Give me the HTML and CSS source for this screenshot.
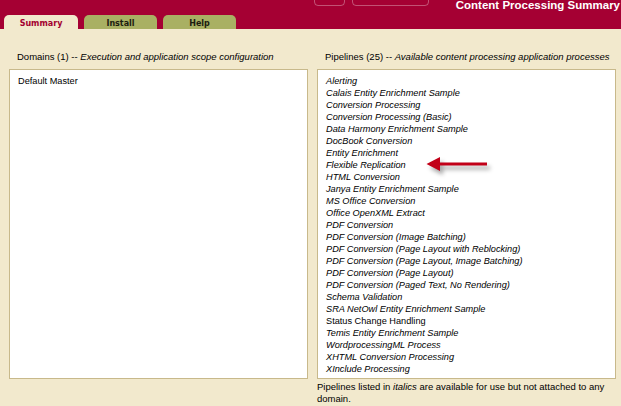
FILE: index.html
```html
<!DOCTYPE html>
<html>
<head>
<meta charset="utf-8">
<link rel="stylesheet" href="styles.css">
</head>
<body>
<header class="topbar">
  <nav class="tabs">
    <div class="tab tab-active">Summary</div>
    <div class="tab">Install</div>
    <div class="tab">Help</div>
  </nav>
  <div class="ghost-buttons">
    <span class="ghost ghost-sm"></span>
    <span class="ghost ghost-lg"></span>
  </div>
  <div class="page-title">Content Processing Summary</div>
</header>
<main class="content">
  <section class="col">
    <h2 class="col-head">Domains (1) -- <em>Execution and application scope configuration</em></h2>
    <div class="listbox">
      <div class="item">Default Master</div>
    </div>
  </section>
  <section class="col">
    <h2 class="col-head">Pipelines (25) -- <em>Available content processing application processes</em></h2>
    <div class="listbox">
      <div class="item it">Alerting</div>
      <div class="item it">Calais Entity Enrichment Sample</div>
      <div class="item it">Conversion Processing</div>
      <div class="item it">Conversion Processing (Basic)</div>
      <div class="item it">Data Harmony Enrichment Sample</div>
      <div class="item it">DocBook Conversion</div>
      <div class="item it">Entity Enrichment</div>
      <div class="item it">Flexible Replication</div>
      <div class="item it">HTML Conversion</div>
      <div class="item it">Janya Entity Enrichment Sample</div>
      <div class="item it">MS Office Conversion</div>
      <div class="item it">Office OpenXML Extract</div>
      <div class="item it">PDF Conversion</div>
      <div class="item it">PDF Conversion (Image Batching)</div>
      <div class="item it">PDF Conversion (Page Layout with Reblocking)</div>
      <div class="item it">PDF Conversion (Page Layout, Image Batching)</div>
      <div class="item it">PDF Conversion (Page Layout)</div>
      <div class="item it">PDF Conversion (Paged Text, No Rendering)</div>
      <div class="item it">Schema Validation</div>
      <div class="item it">SRA NetOwl Entity Enrichment Sample</div>
      <div class="item">Status Change Handling</div>
      <div class="item it">Temis Entity Enrichment Sample</div>
      <div class="item it">WordprocessingML Process</div>
      <div class="item it">XHTML Conversion Processing</div>
      <div class="item it">XInclude Processing</div>
      <svg class="arrow" width="70" height="24" viewBox="0 0 70 24">
        <path d="M1.5 9 L15 2 L15 7.5 L62 7.5 L62 10.5 L15 10.5 L15 16 Z" fill="#c20018"/>
      </svg>
    </div>
    <p class="note">Pipelines listed in <em>italics</em> are available for use but not attached to any domain.</p>
  </section>
</main>
</body>
</html>
```
FILE: styles.css
```css
html, body {
  margin: 0;
  padding: 0;
  background: #f2e9cd;
  font-family: "Liberation Sans", Arial, sans-serif;
  color: #000;
}

.topbar {
  display: flex;
  height: 29px;
  background: #a50033;
  padding-left: 4px;
  overflow: hidden;
}

.tabs {
  display: flex;
  gap: 6px;
  align-self: flex-end;
}

.tab {
  width: 73px;
  height: 14px;
  box-sizing: border-box;
  padding-top: 4px;
  line-height: 10px;
  text-align: center;
  background: #a9b063;
  border-radius: 5px 5px 0 0;
  font-family: "DejaVu Sans", Verdana, sans-serif;
  font-weight: bold;
  font-size: 8px;
  color: #1c1c10;
}

.tab-active {
  width: 74px;
  background: #f2e9cd;
  color: #a3002f;
}

.ghost-buttons {
  display: flex;
  gap: 7px;
  margin-left: 78px;
  margin-top: -14px;
  align-self: flex-start;
}

.ghost {
  display: block;
  height: 20px;
  box-sizing: border-box;
  border: 1px solid rgba(255, 255, 255, 0.32);
  border-radius: 4px;
}

.ghost-sm { width: 31px; }
.ghost-lg { width: 77px; }

.page-title {
  flex: 1;
  text-align: right;
  padding-right: 1px;
  font-weight: bold;
  font-size: 11.5px;
  line-height: 12px;
  margin-top: -1px;
  color: #fff;
  white-space: nowrap;
}

.content {
  display: grid;
  grid-template-columns: 299px 299px;
  gap: 9px;
  padding: 22px 5px 0 9px;
}

.col-head {
  margin: 0 0 6px 0;
  padding-left: 8px;
  font-size: 9.5px;
  line-height: 12px;
  font-weight: normal;
  white-space: nowrap;
}

.listbox {
  position: relative;
  height: 310px;
  box-sizing: border-box;
  background: #fff;
  border: 1px solid #c8b98b;
  padding: 5px 8px;
}

.item {
  font-size: 9.2px;
  line-height: 12px;
  white-space: nowrap;
}

.item.it {
  font-style: italic;
}

.arrow {
  position: absolute;
  left: 107px;
  top: 85px;
  filter: drop-shadow(3px 4px 2px rgba(0, 0, 0, 0.35));
}

.note {
  margin: 2px 0 0 0;
  font-size: 9.5px;
  line-height: 12px;
}
```
